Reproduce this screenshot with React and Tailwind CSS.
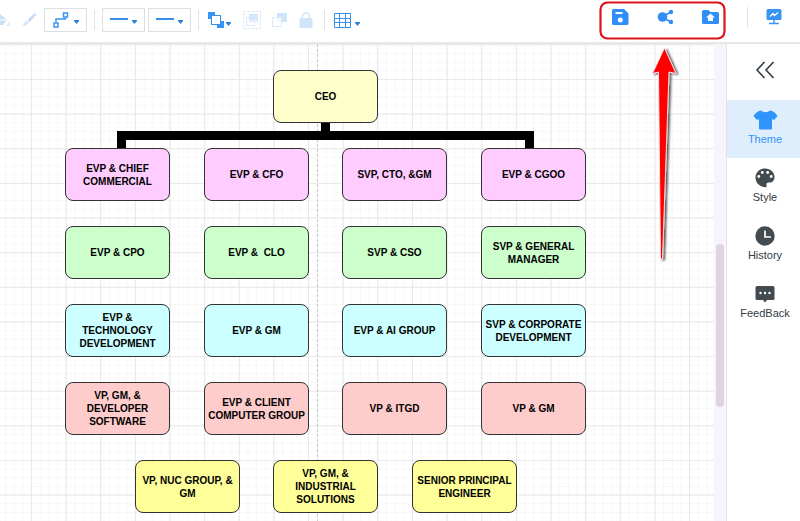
import React from "react";

const rows = [
  { top: "top-[104px]", fill: "bg-[#ffccff]", labels: [["EVP & CHIEF", "COMMERCIAL"], ["EVP & CFO"], ["SVP, CTO, &GM"], ["EVP & CGOO"]] },
  { top: "top-[182px]", fill: "bg-[#ccffcc]", labels: [["EVP & CPO"], ["EVP &  CLO"], ["SVP & CSO"], ["SVP & GENERAL", "MANAGER"]] },
  { top: "top-[260px]", fill: "bg-[#ccffff]", labels: [["EVP &", "TECHNOLOGY", "DEVELOPMENT"], ["EVP & GM"], ["EVP & AI GROUP"], ["SVP & CORPORATE", "DEVELOPMENT"]] },
  { top: "top-[338px]", fill: "bg-[#ffcccc]", labels: [["VP, GM, &", "DEVELOPER", "SOFTWARE"], ["EVP & CLIENT", "COMPUTER GROUP"], ["VP & ITGD"], ["VP & GM"]] },
];
const columns = ["left-[65px]", "left-[204px]", "left-[342px]", "left-[481px]"];

function Node({ lines, place, fill }) {
  return (
    <div className={`absolute flex h-[53px] w-[105px] flex-col items-center justify-center rounded-lg border border-[#333] text-[10px] leading-[13px] font-bold whitespace-pre text-black ${place} ${fill}`}>
      {lines.map((line) => (
        <span key={line}>{line}</span>
      ))}
    </div>
  );
}

function Caret() {
  return (
    <svg width="5" height="4" viewBox="0 0 5 4" className="shrink-0" aria-hidden="true">
      <path d="M0 0h5v1L2.500 4 0 1z" fill="#2f7fdc" />
    </svg>
  );
}

function Divider() {
  return <span className="h-5 w-px shrink-0 bg-[#e2e2e2]" />;
}

function LineButton({ label, children }) {
  return (
    <button type="button" aria-label={label} className="flex h-6 w-[43px] shrink-0 items-center justify-between border border-[#dcdfe4] px-[7px]">
      {children}
      <span className="pt-1"><Caret /></span>
    </button>
  );
}

function Toolbar() {
  return (
    <header className="flex h-[44px] shrink-0 items-start justify-between overflow-hidden border-b-2 border-[#e8e8e8] bg-white">
      <div className="flex h-10 shrink-0 items-center">
        <button type="button" aria-label="Fill" className="w-[10px]">
          <svg width="10" height="16" viewBox="0 0 10 16">
            <path d="M0 2l7 6-4 5H0z" fill="#c9e0f8" />
            <path d="M0 8h6" stroke="#e8f2fc" strokeWidth="2" />
            <path d="M8.500 10c1 2 1.500 2.500 1.500 4H7c0-1.500.5-2 1.500-4z" fill="#d8e9fa" />
          </svg>
        </button>
        <button type="button" aria-label="Format painter" className="ml-3">
          <svg width="15" height="14" viewBox="0 0 15 14">
            <path d="M12.500 0l2 1.500L8 9 5.500 7z" fill="#c5ddf6" />
            <path d="M4.500 7.500l2.500 2C5 12.500 3 13 0 13c2-1.500 2-3.500 4.500-5.500z" fill="#d5e7f9" />
          </svg>
        </button>
        <div className="ml-[7px]">
          <LineButton label="Connector type">
            <svg width="20" height="18" viewBox="0 0 20 18" fill="none" stroke="#3b93f2" strokeWidth="1.500">
              <path d="M4 11V8h9.500V6" />
              <rect x="11.500" y="2" width="4" height="4" />
              <rect x="2" y="12" width="4" height="4" />
            </svg>
          </LineButton>
        </div>
        <div className="ml-[7px] flex items-center gap-[7px]">
          <Divider />
          <div className="flex gap-[3px]">
            <LineButton label="Line style">
              <svg width="18" height="10" viewBox="0 0 18 10"><path d="M0 4h18" stroke="#3b8ded" strokeWidth="2" /></svg>
            </LineButton>
            <LineButton label="Line width">
              <svg width="18" height="10" viewBox="0 0 18 10"><path d="M0 4h18" stroke="#3b8ded" strokeWidth="2" /></svg>
            </LineButton>
          </div>
          <Divider />
        </div>
        <button type="button" aria-label="Arrange" className="ml-[9px] flex items-center gap-0.5">
          <svg width="16" height="16" viewBox="0 0 16 16">
            <path d="M0 0h7v3H3v4H0zM16 16H9v-3h4V9h3z" fill="#3993f5" />
            <rect x="3.500" y="3.500" width="9" height="9" fill="#fff" stroke="#3993f5" />
          </svg>
          <span className="pt-2"><Caret /></span>
        </button>
        <div className="ml-3 flex items-center gap-[11px]">
          <button type="button" aria-label="Group">
            <svg width="18" height="18" viewBox="0 0 18 18" fill="none" stroke="#d8e8f9">
              <rect x=".5" y=".5" width="17" height="17" strokeDasharray="3 1" />
              <path d="M7.500 6.500h-4v8h8v-3" />
              <rect x="6.500" y="3.500" width="8" height="7" fill="#d3e6fa" />
              <path d="M7.500 9.500h6" stroke="#eef6fe" />
            </svg>
          </button>
          <button type="button" aria-label="Ungroup">
            <svg width="16" height="16" viewBox="0 0 16 16">
              <rect x="5" y="1" width="10" height="9" fill="#cfe3f9" />
              <rect x=".5" y="5.500" width="9" height="9" fill="#fff" fillOpacity=".4" stroke="#dbeafa" />
              <rect x="5" y="6" width="4" height="4" fill="#eff6fe" />
            </svg>
          </button>
          <button type="button" aria-label="Lock">
            <svg width="14" height="16" viewBox="0 0 14 16">
              <path d="M3.500 7V4.500a3.500 3.500 0 017 0V7" fill="none" stroke="#cfe3f9" strokeWidth="1.500" />
              <rect x=".5" y="6" width="13" height="10" rx="1.500" fill="#cfe3f9" />
            </svg>
          </button>
          <Divider />
        </div>
        <button type="button" aria-label="Table" className="ml-[9px] flex items-center gap-1">
          <svg width="17" height="15" viewBox="0 0 17 15" fill="none" stroke="#3d8ee9">
            <path d="M.5.5h16v14H.5zM.5 5.500h16M.5 9.500h16M5.500 .5v14M11.500 .5v14" />
          </svg>
          <span className="pt-2"><Caret /></span>
        </button>
      </div>
      <div className="flex h-[34px] shrink-0 items-center gap-7 pr-[18px]">
        <div className="flex items-center gap-7">
          <button type="button" aria-label="Save">
            <svg width="17" height="16" viewBox="0 0 17 16">
              <path d="M1.500 0h10.500l4.500 4.500v10a1.500 1.500 0 01-1.500 1.500h-13.500A1.500 1.500 0 010 14.500v-13A1.500 1.500 0 011.500 0z" fill="#2f8ff7" />
              <path d="M3.500 4h7" stroke="#fff" strokeWidth="2" />
              <circle cx="8.300" cy="11" r="2.500" fill="#fff" />
            </svg>
          </button>
          <button type="button" aria-label="Share">
            <svg width="17" height="16" viewBox="0 0 17 16" fill="#2f8ff7">
              <path d="M14 3L5 8l9 5" fill="none" stroke="#2f8ff7" strokeWidth="1.500" />
              <circle cx="5.500" cy="8" r="4.800" />
              <circle cx="14" cy="3" r="2.200" />
              <circle cx="14" cy="13" r="2.200" />
            </svg>
          </button>
          <button type="button" aria-label="Export">
            <svg width="17" height="14" viewBox="0 0 17 14">
              <path d="M1.500 0h5l2 2h7A1.500 1.500 0 0117 3.500v9a1.500 1.500 0 01-1.500 1.500h-14A1.500 1.500 0 010 12.500v-11A1.500 1.500 0 011.500 0z" fill="#2f8ff7" />
              <path d="M8.500 3.500l4.500 4h-2V11H6V7.500H4z" fill="#fff" />
            </svg>
          </button>
        </div>
        <div className="flex items-center gap-[18px]">
          <Divider />
          <button type="button" aria-label="Present">
            <svg width="16" height="16" viewBox="0 0 16 16">
              <rect x=".5" width="15" height="11" rx="1.500" fill="#3993f5" />
              <path d="M4 7.500l3-3 1.500 2L12 3.500" fill="none" stroke="#fff" strokeWidth="1.300" />
              <path d="M8 11v4M3 14.500h10" stroke="#3993f5" strokeWidth="1.500" />
            </svg>
          </button>
        </div>
      </div>
    </header>
  );
}

function Canvas() {
  return (
    <main className="relative min-w-0 flex-1 overflow-hidden bg-white">
      <svg className="absolute inset-0 h-full w-full" aria-hidden="true">
        <defs>
          <pattern id="minor" x="31" y="0.300" width="8.660" height="8.660" patternUnits="userSpaceOnUse">
            <path d="M0 .5h8.660M.5 0v8.660" stroke="#f7f7f7" />
          </pattern>
          <pattern id="major" x="30.900" y="0.300" width="34.640" height="34.640" patternUnits="userSpaceOnUse">
            <path d="M0 .5h34.640M.5 0v34.640" stroke="#e8e8e8" />
          </pattern>
        </defs>
        <rect width="100%" height="100%" fill="url(#minor)" />
        <rect width="100%" height="100%" fill="url(#major)" />
        <path d="M317.500 0v600" stroke="#c8c8c8" strokeDasharray="3 2" />
        <path d="M121.500 105V91.500h408V105M325.500 79v12" fill="none" stroke="#000" strokeWidth="9" />
      </svg>
      <Node lines={["CEO"]} place="left-[273px] top-[26px]" fill="bg-[#ffffcc]" />
      {rows.map((row) =>
        row.labels.map((lines, i) => (
          <Node key={lines.join(" ")} lines={lines} place={`${columns[i]} ${row.top}`} fill={row.fill} />
        ))
      )}
      <Node lines={["VP, NUC GROUP, &", "GM"]} place="left-[135px] top-[416px]" fill="bg-[#ffff99]" />
      <Node lines={["VP, GM, &", "INDUSTRIAL", "SOLUTIONS"]} place="left-[273px] top-[416px]" fill="bg-[#ffff99]" />
      <Node lines={["SENIOR PRINCIPAL", "ENGINEER"]} place="left-[412px] top-[416px]" fill="bg-[#ffff99]" />
    </main>
  );
}

function ShirtIcon() {
  return (
    <svg width="25" height="20" viewBox="0 0 25 20" fill="#2f94fb">
      <path d="M8 .5c2.500 2.200 6.500 2.200 9 0 3 .5 5.500 2 7.500 5.500L21 10l-2-1v9.500a1 1 0 01-1 1H7a1 1 0 01-1-1V9l-2 1L.5 6C2.500 2.500 5 1 8 .5z" />
    </svg>
  );
}

function PaletteIcon() {
  return (
    <svg width="20" height="20" viewBox="0 0 20 20">
      <path d="M10 .5c5.500 0 9.500 3.800 9.500 8.500 0 3.500-2 5.500-5 5.500-2.500 0-3.500.8-3 2.500.3 1.500 0 2.500-1.500 2.300C4 18.500.5 14.500.5 9.500S4.500.5 10 .5z" fill="#434b50" />
      <g fill="#fff">
        <circle cx="3.800" cy="8.500" r="1.400" />
        <circle cx="7.300" cy="4.500" r="1.400" />
        <circle cx="12.700" cy="4.500" r="1.400" />
        <circle cx="16.200" cy="8.500" r="1.400" />
      </g>
    </svg>
  );
}

function ClockIcon() {
  return (
    <svg width="20" height="20" viewBox="0 0 20 20">
      <circle cx="10" cy="10" r="9.700" fill="#434b50" />
      <path d="M10 4.500V11h6" fill="none" stroke="#fff" strokeWidth="1.700" />
    </svg>
  );
}

function CommentIcon() {
  return (
    <svg width="20" height="18" viewBox="0 0 20 18">
      <path d="M2 1h16a1.500 1.500 0 011.500 1.500v11A1.500 1.500 0 0118 15h-6l-2 2.500L8 15H2a1.500 1.500 0 01-1.500-1.500v-11A1.500 1.500 0 012 1z" fill="#434b50" />
      <g fill="#fff">
        <circle cx="5.500" cy="8" r="1.200" />
        <circle cx="10" cy="8" r="1.200" />
        <circle cx="14.500" cy="8" r="1.200" />
      </g>
    </svg>
  );
}

const panels = [
  { label: "Theme", Icon: ShirtIcon, active: true },
  { label: "Style", Icon: PaletteIcon },
  { label: "History", Icon: ClockIcon },
  { label: "FeedBack", Icon: CommentIcon },
];

function Sidebar() {
  return (
    <nav className="flex w-[74px] shrink-0 flex-col border-l border-[#e6e1e8] bg-white">
      <button type="button" aria-label="Collapse panel" className="flex h-14 items-center justify-center pb-1 pl-[3px]">
        <svg width="20" height="18" viewBox="0 0 20 18" fill="none" stroke="#333b42" strokeWidth="1.600">
          <path d="M9.500 1L2 9l7.500 8M18.500 1L11 9l7.500 8" />
        </svg>
      </button>
      {panels.map(({ label, Icon, active }) => (
        <button
          key={label}
          type="button"
          className={`flex h-[58px] flex-col items-center pt-[9px] pl-[3px] text-[11px] leading-4 ${active ? "bg-[#dfeefc] text-[#2f94fb]" : "bg-white text-[#333b42]"}`}
        >
          <span className="flex h-[22px] items-center"><Icon /></span>
          {label}
        </button>
      ))}
    </nav>
  );
}

function Annotation() {
  return (
    <svg className="pointer-events-none absolute top-0 right-[64px]" width="144" height="270" viewBox="592 0 144 270" aria-hidden="true">
      <defs>
        <filter id="shade" x="-50%" y="-10%" width="220%" height="120%">
          <feDropShadow dx="2" dy="1" stdDeviation="1.200" floodColor="#000" floodOpacity=".65" />
        </filter>
      </defs>
      <rect x="600.500" y="2.500" width="124" height="36" rx="7" fill="none" stroke="#dc1418" strokeWidth="2.200" />
      <path d="M664.500 48L676 73.500l-7-1.500L662.500 259h-2L658.500 72l-6 1.500z" fill="#fe0000" stroke="#f6dcdc" strokeWidth="1" filter="url(#shade)" />
    </svg>
  );
}

export default function App() {
  return (
    <div className="relative flex h-screen flex-col overflow-hidden bg-white font-['Liberation_Sans',Arial,sans-serif]">
      <Toolbar />
      <div className="flex min-h-0 flex-1">
        <Canvas />
        <div className="w-3 shrink-0 bg-[#f9f4fb] px-0.5 pt-[200px]">
          <div className="h-[163px] rounded-full bg-[#ddd6df]" />
        </div>
        <Sidebar />
      </div>
      <Annotation />
    </div>
  );
}
